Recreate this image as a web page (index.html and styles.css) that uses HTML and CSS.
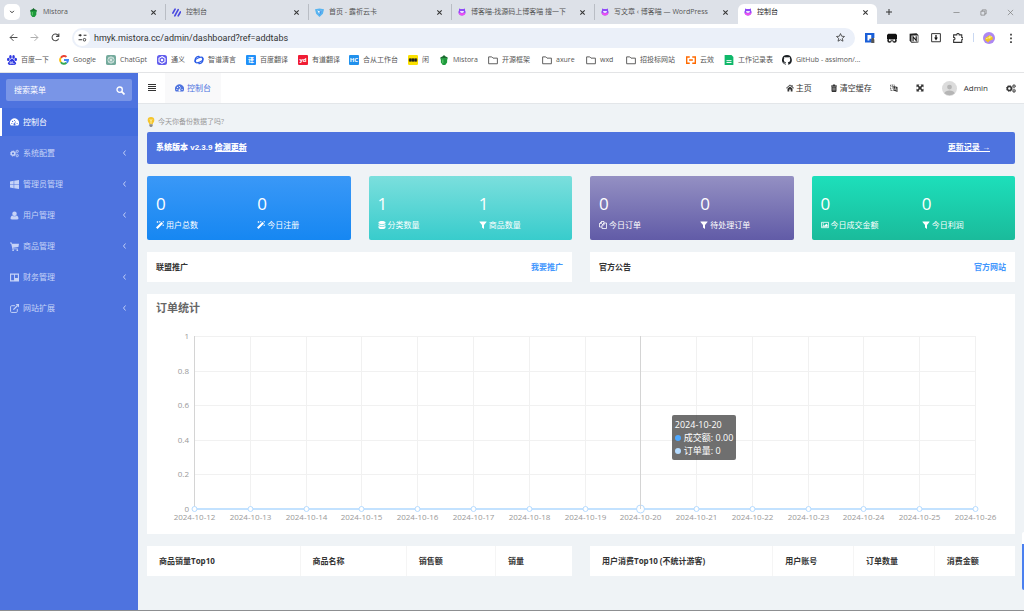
FILE: index.html
```html
<!DOCTYPE html>
<html lang="zh-CN">
<head>
<meta charset="utf-8">
<title>控制台</title>
<link rel="stylesheet" href="styles.css">
</head>
<body>
<svg class="sprite" aria-hidden="true">
  <symbol id="i-close" viewBox="0 0 16 16"><path d="M3 3l10 10M13 3L3 13" fill="none" stroke="currentColor" stroke-width="2.4"/></symbol>
  <symbol id="i-pot" viewBox="0 0 16 16"><path d="M2 4l4-2 2-2 2 2 4 2-1 2H3z" fill="#176b2c"/><path d="M2 5h12l-1 3v4l-3 4H6l-3-4V8z" fill="#1e9a3c"/><path d="M5 7h2v6H5z" fill="#5cc46c"/></symbol>
  <symbol id="i-slashes" viewBox="0 0 16 16"><path d="M1.500 9l4-7M5 14l6-11M11 14l4-7" stroke="#4a4ae0" stroke-width="3" stroke-linecap="round"/></symbol>
  <symbol id="i-shield" viewBox="0 0 16 16"><path d="M0 2l8-1 8 1-2 8-6 6-6-6z" fill="#58b4f0"/><path d="M4 4l4 7 4-7-4 2z" fill="#fff"/><path d="M8 7l4-3-4 9z" fill="#2a7be0"/></symbol>
  <symbol id="i-cat" viewBox="0 0 16 16"><path d="M2 1l3 1h6l3-1v4c3 4 0 10-6 10S-1 9 2 5z" fill="#8f4cf8"/><path d="M1 9c3 2 11 2 14 0-1 4-3 6-7 6s-6-2-7-6z" fill="#f04df0"/><path d="M4 6h8q0 4-4 4T4 6z" fill="#f4e6ff"/></symbol>
  <symbol id="i-home" viewBox="0 0 16 16"><path d="M0 8l8-7 3 3V2h2v3l3 3-1 1-7-6-7 6zM3 9l5-4 5 4v6H9.500v-4h-3v4H3z" fill="currentColor"/></symbol>
  <symbol id="i-trash" viewBox="0 0 16 16"><path d="M2 3h3l1-2h4l1 2h3v2H2z" fill="currentColor"/><path d="M3 5h10v9l-1 2H4l-1-2z" fill="currentColor"/><path d="M6 7v6M8 7v6M10 7v6" stroke="#fff" stroke-width=".8"/></symbol>
  <symbol id="i-lang" viewBox="0 0 16 16"><path d="M1 2h8v11H1zM3 5h4M5 3v2M3 10c3-1 3-3 3-5" fill="none" stroke="currentColor" stroke-width="1.300" stroke-dasharray="2 1"/><path d="M7 4l8 2v10l-8-3z" fill="currentColor"/><path d="M9 12l2-5 2 6M10 10.500h2.500" fill="none" stroke="#fff"/></symbol>
  <symbol id="i-expand" viewBox="0 0 16 16"><path d="M1 1h6L5.200 2.800 8 5.600l2.800-2.800L9 1h6v6l-1.800-1.800L10.400 8l2.800 2.800L15 9v6H9l1.800-1.800L8 10.400l-2.800 2.800L7 15H1V9l1.800 1.800L5.600 8 2.800 5.200 1 7z" fill="currentColor"/></symbol>
  <symbol id="i-cogs" viewBox="0 0 18 16"><circle cx="6" cy="8" r="3.600" fill="none" stroke="currentColor" stroke-width="2.800"/><circle cx="6" cy="8" r="5.300" fill="none" stroke="currentColor" stroke-width="1.600" stroke-dasharray="2.100 2.060"/><circle cx="14.500" cy="3.800" r="2" fill="none" stroke="currentColor" stroke-width="1.600"/><circle cx="14.500" cy="3.800" r="3" fill="none" stroke="currentColor" stroke-dasharray="1.300 1.060"/><circle cx="14.500" cy="12.200" r="2" fill="none" stroke="currentColor" stroke-width="1.600"/><circle cx="14.500" cy="12.200" r="3" fill="none" stroke="currentColor" stroke-dasharray="1.300 1.060"/></symbol>
  <symbol id="i-dash" viewBox="0 0 18 16"><path fill-rule="evenodd" d="M1.600 14A9 9 0 1 1 16.400 14zM2.500 10a1.200 1.200 0 1 0 2.400 0 1.200 1.200 0 1 0-2.400 0M4 5.800a1.200 1.200 0 1 0 2.400 0 1.200 1.200 0 1 0-2.400 0M7.800 4a1.200 1.200 0 1 0 2.400 0 1.200 1.200 0 1 0-2.400 0M13 10a1.200 1.200 0 1 0 2.400 0 1.200 1.200 0 1 0-2.400 0M10.600 5.500L8.800 9.400a2 2 0 1 0 1.300.400l1.600-4z" fill="currentColor"/></symbol>
  <symbol id="i-win" viewBox="0 0 16 16"><path d="M0 2.500l6.500-1v6H0zM7.500 1.300L16 0v7.500H7.500zM0 8.500h6.500v6L0 13.500zM7.500 8.500H16V16l-8.500-1.300z" fill="currentColor"/></symbol>
  <symbol id="i-user" viewBox="0 0 16 16"><circle cx="8" cy="5" r="4" fill="currentColor"/><path d="M4 8c2 2 6 2 8 0 2 1 3 3 3 5s-1 2-2 2H3c-1 0-2 0-2-2s1-4 3-5z" fill="currentColor"/></symbol>
  <symbol id="i-cart" viewBox="0 0 16 16"><path d="M0 1h3l.500 2H16l-1 6-9.500 1 .300 1.500H14V13H4.500L2 2.500H0z" fill="currentColor"/><circle cx="5.500" cy="14.500" r="1.500" fill="currentColor"/><circle cx="13" cy="14.500" r="1.500" fill="currentColor"/></symbol>
  <symbol id="i-trello" viewBox="0 0 16 16"><path fill-rule="evenodd" d="M0 1h16v14H0zM2 3v10h5.200V3zM8.800 3v6H14V3z" fill="currentColor"/></symbol>
  <symbol id="i-ext" viewBox="0 0 16 16"><path d="M9 3H3Q1 3 1 5v8q0 2 2 2h8q2 0 2-2V9" fill="none" stroke="currentColor" stroke-width="1.700"/><path d="M6 10l7-7" stroke="currentColor" stroke-width="2.200"/><path d="M10 0h6v6z" fill="currentColor"/></symbol>
  <symbol id="i-left" viewBox="0 0 8 16"><path d="M6 3L2 8l4 5" fill="none" stroke="currentColor" stroke-width="1.900"/></symbol>
  <symbol id="i-search" viewBox="0 0 16 16"><circle cx="6.500" cy="6.500" r="4.700" fill="none" stroke="currentColor" stroke-width="2.400"/><path d="M10 10l5 5" stroke="currentColor" stroke-width="3"/></symbol>
  <symbol id="i-magic" viewBox="0 0 16 16"><path d="M0 13L11 2l3 3L3 16z" fill="currentColor"/><path d="M3 0v4M1 2h4M7.500 0v3M6 1.500h3M14.500 0v3M13 1.500h3M14.500 7v3M13 8.500h3" stroke="currentColor" stroke-width="1.200"/></symbol>
  <symbol id="i-db" viewBox="0 0 16 16"><path d="M1 3c0-4 14-4 14 0v1c0 3-14 3-14 0zM1 6c3 2 11 2 14 0v2c0 3-14 3-14 0zM1 10c3 2 11 2 14 0v3c0 4-14 4-14 0z" fill="currentColor"/></symbol>
  <symbol id="i-filter" viewBox="0 0 16 16"><path d="M1 1h14v1l-5 6v8l-4-3V8L1 2z" fill="currentColor"/></symbol>
  <symbol id="i-copy" viewBox="0 0 16 16"><path d="M5 1h5v3M5 1L1 5v7h5M5 1v4H1M10 4h5v11H6V8zM10 4v4H6" fill="none" stroke="currentColor" stroke-width="1.600"/></symbol>
  <symbol id="i-image" viewBox="0 0 18 16"><path d="M1 2h16v12H1z" fill="none" stroke="currentColor" stroke-width="1.800"/><circle cx="5" cy="5.500" r="1.500" fill="currentColor"/><path d="M3 12v-2l3-2 1.500 1.500L12 5l3 3v4z" fill="currentColor"/></symbol>
  <symbol id="i-folder" viewBox="0 0 16 16"><path d="M1 3h5l2 2h7v9H1z" fill="none" stroke="currentColor" stroke-width="1.500" stroke-linejoin="round"/></symbol>
  <symbol id="i-bars" viewBox="0 0 8 8"><path d="M0 .5h8M0 2.500h8M0 4.500h8M0 6.500h8" stroke="currentColor"/></symbol>
</svg>

<header class="browser">
  <nav class="tabs">
    <button class="tab-list" aria-label="搜索标签页"><svg viewBox="0 0 16 16"><path d="M3 5l5 5 5-5" fill="none" stroke="#222" stroke-width="2.400"/></svg></button>
    <div class="tab"><svg class="fav"><use href="#i-pot"/></svg><span class="latin">Mistora</span><button aria-label="关闭"><svg><use href="#i-close"/></svg></button></div>
    <div class="tab"><svg class="fav"><use href="#i-slashes"/></svg><span>控制台</span><button aria-label="关闭"><svg><use href="#i-close"/></svg></button></div>
    <div class="tab"><svg class="fav"><use href="#i-shield"/></svg><span>首页 - 露祈云卡</span><button aria-label="关闭"><svg><use href="#i-close"/></svg></button></div>
    <div class="tab"><svg class="fav small"><use href="#i-cat"/></svg><span>博客喵-找源码上博客喵 搜一下</span><button aria-label="关闭"><svg><use href="#i-close"/></svg></button></div>
    <div class="tab last"><svg class="fav small"><use href="#i-cat"/></svg><span>写文章 ‹ 博客喵 — WordPress</span><button aria-label="关闭"><svg><use href="#i-close"/></svg></button></div>
    <div class="tab active"><svg class="fav small"><use href="#i-cat"/></svg><span>控制台</span><button aria-label="关闭"><svg><use href="#i-close"/></svg></button></div>
    <button class="new-tab" aria-label="新标签页"><svg viewBox="0 0 16 16"><path d="M8 2v12M2 8h12" stroke="#333" stroke-width="2"/></svg></button>
    <div class="window-buttons">
      <button aria-label="最小化"><svg viewBox="0 0 16 16"><path d="M1 8h14" stroke="#777" stroke-width="1.500"/></svg></button>
      <button aria-label="还原"><svg viewBox="0 0 16 16"><path d="M2 5h9v9H2zM5 5V2h9v9h-3" fill="none" stroke="#777" stroke-width="1.500"/></svg></button>
      <button aria-label="关闭窗口"><svg viewBox="0 0 16 16"><path d="M2 2l12 12M14 2L2 14" stroke="#777" stroke-width="1.500"/></svg></button>
    </div>
  </nav>
  <div class="toolbar">
    <button aria-label="后退"><svg viewBox="0 0 16 16"><path d="M15 8H2M8 2L2 8l6 6" fill="none" stroke="#444" stroke-width="1.700"/></svg></button>
    <button aria-label="前进"><svg viewBox="0 0 16 16"><path d="M1 8h13M8 2l6 6-6 6" fill="none" stroke="#aaa" stroke-width="1.700"/></svg></button>
    <button aria-label="刷新"><svg viewBox="0 0 16 16"><path d="M13.500 10A6 6 0 1 1 12 3.500l2 2M14 1v5H9" fill="none" stroke="#444" stroke-width="1.800"/></svg></button>
    <div class="omnibox">
      <span class="site"><svg viewBox="0 0 16 16"><path d="M1 4h5M10 4h5M1 12h6" stroke="#333" stroke-width="1.800"/><circle cx="4" cy="4" r="2" fill="#333"/><circle cx="11.500" cy="12" r="2.300" fill="none" stroke="#333" stroke-width="1.600"/></svg></span>
      <input aria-label="地址" value="hmyk.mistora.cc/admin/dashboard?ref=addtabs">
      <button aria-label="收藏"><svg viewBox="0 0 16 16"><path d="M8 1l2.100 4.700 5 .500-3.800 3.400 1.100 5L8 12l-4.400 2.600 1.100-5L.900 6.200l5-.500z" fill="none" stroke="#333" stroke-width="1.400"/></svg></button>
    </div>
    <div class="extensions">
      <button aria-label="翻译"><svg viewBox="0 0 16 16"><path d="M0 0h15v8h-4v7H0z" fill="#1a5fd8"/><path d="M4 3h6v6H7v3H4z" fill="#fff"/><path d="M10 11l1-3h3l1 3v5h-5z" fill="#555"/></svg></button>
      <button aria-label="脚本"><svg viewBox="0 0 16 16"><path d="M2 1h12l2 2v7H0V3z" fill="#111"/><circle cx="4" cy="12" r="3.500" fill="#111"/><circle cx="12" cy="12" r="3.500" fill="#111"/><path d="M3 10h3v3H3zM10 10h3v3h-3z" fill="#fff"/></svg></button>
      <button aria-label="笔记"><svg viewBox="0 0 16 16"><path d="M1 1l11-.5 3 2.500v12l-11 .500-3-3z" fill="#222"/><path d="M4 4h10v10H4z" fill="#fff"/><path d="M6.500 13V6l5 6V5" fill="none" stroke="#111" stroke-width="1.800"/></svg></button>
      <button aria-label="下载"><svg viewBox="0 0 16 16"><path d="M1 1h14v13H1z" fill="none" stroke="#333" stroke-width="1.600"/><path d="M7 3h2v4h2l-3 5-3-5h2z" fill="#111"/></svg></button>
      <button aria-label="扩展程序"><svg viewBox="0 0 16 16"><path d="M1 3h5c0-3 4-3 4 0h4v4c3 0 3 4 0 4v4H1v-4c3 0 3-4 0-4z" fill="none" stroke="#333" stroke-width="1.700"/></svg></button>
      <i class="divider"></i>
      <button class="profile" aria-label="个人资料"><svg viewBox="0 0 16 16"><circle cx="8" cy="8" r="8" fill="#ad87f2"/><path d="M3 8l6-4 4 3v3l-5 2-1 2-4-3z" fill="#f2c51e"/><path d="M4 9l8-3M9 5v4" stroke="#fff3a0"/></svg></button>
      <button aria-label="菜单"><svg viewBox="0 0 16 16"><path d="M8 1v3M8 7v3M8 13v3" stroke="#333" stroke-width="2.600"/></svg></button>
    </div>
  </div>
  <nav class="bookmarks">
    <a href="#"><svg viewBox="0 0 16 16"><g fill="#2b35e0"><ellipse cx="2" cy="7" rx="2" ry="2.500"/><ellipse cx="5.500" cy="3" rx="2" ry="3"/><ellipse cx="10.500" cy="3" rx="2" ry="3"/><ellipse cx="14" cy="7" rx="2" ry="2.500"/><path d="M8 6c3 0 4 4 6 6s-1 4-3 4H5c-2 0-5-2-3-4s3-6 6-6z"/></g><path d="M5 11h2v3H5zM9 10v4h3" fill="none" stroke="#fff"/></svg><span>百度一下</span></a>
    <a href="#"><svg viewBox="0 0 16 16" fill="none" stroke-width="3"><path d="M3 4.500A6 6 0 0 1 12 3" stroke="#ea4335"/><path d="M3 11.500A6 6 0 0 1 3 4.500" stroke="#fbbc05"/><path d="M12 12.500a6 6 0 0 1-9-1" stroke="#34a853"/><path d="M8 8h6.500c0 2-1 3.500-2.500 4.500" stroke="#4285f4"/></svg><span>Google</span></a>
    <a href="#"><svg viewBox="0 0 16 16"><rect width="16" height="16" rx="3" fill="#74aa9c"/><circle cx="8" cy="8" r="5" fill="none" stroke="#fff"/><path d="M8 3v5l4 3M4 5l4 3-4 3M12 5L8 8v5" stroke="#fff" fill="none"/></svg><span>ChatGpt</span></a>
    <a href="#"><svg viewBox="0 0 16 16"><rect width="16" height="16" rx="4" fill="#615ced"/><path d="M8 2.500l4.800 2.700v5.600L8 13.500l-4.800-2.700V5.200z" fill="none" stroke="#fff" stroke-width="1.700"/><circle cx="8" cy="8" r="2" fill="#fff"/></svg><span>通义</span></a>
    <a href="#"><svg viewBox="0 0 16 16" fill="none" stroke="#2b5ce6" stroke-width="2"><ellipse cx="8" cy="8" rx="7" ry="3.600" transform="rotate(-25 8 8)"/><path d="M3 11A5.500 5.500 0 0 1 9 2.500M13 5A5.500 5.500 0 0 1 7 13.500"/></svg><span>智谱清言</span></a>
    <a href="#"><i class="badge blue">译</i><span>百度翻译</span></a>
    <a href="#"><i class="badge red">yd</i><span>有道翻译</span></a>
    <a href="#"><i class="badge sky">HC</i><span>合从工作台</span></a>
    <a href="#"><svg viewBox="0 0 16 16"><rect width="16" height="16" rx="2" fill="#fbe000"/><path d="M2 6h3v4H2zM6 6h4v4H6zM11 6h3v4h-3z" fill="#222" stroke="#222"/></svg><span>闲</span></a>
    <a href="#"><svg><use href="#i-pot"/></svg><span>Mistora</span></a>
    <a href="#"><svg><use href="#i-folder"/></svg><span>开源框架</span></a>
    <a href="#"><svg><use href="#i-folder"/></svg><span>axure</span></a>
    <a href="#"><svg><use href="#i-folder"/></svg><span>wxd</span></a>
    <a href="#"><svg><use href="#i-folder"/></svg><span>招投标网站</span></a>
    <a href="#"><svg viewBox="0 0 16 16"><path d="M6 3H1v10h5M10 3h5v10h-5M5 8h6" fill="none" stroke="#ff6a00" stroke-width="2.400"/></svg><span>云效</span></a>
    <a href="#"><svg viewBox="0 0 16 16"><path d="M1 0h11l3 3v13H1z" fill="#10b86a"/><path d="M4 9h8M4 12h8" stroke="#fff" stroke-width="1.500"/></svg><span>工作记录表</span></a>
    <a href="#"><svg viewBox="0 0 16 16"><path fill="#1b1f23" d="M8 0a8 8 0 0 0-2.500 15.600c.400 0 .500-.2.500-.4v-1.500c-2.200.500-2.700-1-2.700-1-.4-.9-.9-1.200-.9-1.200-.7-.5.100-.5.100-.5.800.1 1.200.8 1.200.8.700 1.300 1.900.9 2.300.7.100-.5.300-.9.500-1.100-1.800-.2-3.600-.9-3.600-4 0-.9.300-1.600.8-2.100-.1-.2-.4-1 .1-2.100 0 0 .7-.2 2.200.8a7.600 7.600 0 0 1 4 0c1.500-1 2.200-.8 2.200-.8.400 1.100.2 1.900.1 2.100.5.600.8 1.300.8 2.100 0 3.100-1.900 3.800-3.700 4 .3.300.6.800.6 1.500v2.200c0 .2.100.5.500.4A8 8 0 0 0 8 0z"/></svg><span>GitHub - assimon/...</span></a>
  </nav>
</header>

<div class="app">
  <aside class="sidebar">
    <form class="search"><input aria-label="搜索菜单" placeholder="搜索菜单"><button type="button" aria-label="搜索"><svg><use href="#i-search"/></svg></button></form>
    <nav class="menu">
      <a href="#" class="current"><svg><use href="#i-dash"/></svg>控制台</a>
      <a href="#"><svg><use href="#i-cogs"/></svg>系统配置<svg class="arrow"><use href="#i-left"/></svg></a>
      <a href="#"><svg><use href="#i-win"/></svg>管理员管理<svg class="arrow"><use href="#i-left"/></svg></a>
      <a href="#"><svg><use href="#i-user"/></svg>用户管理<svg class="arrow"><use href="#i-left"/></svg></a>
      <a href="#"><svg><use href="#i-cart"/></svg>商品管理<svg class="arrow"><use href="#i-left"/></svg></a>
      <a href="#"><svg><use href="#i-trello"/></svg>财务管理<svg class="arrow"><use href="#i-left"/></svg></a>
      <a href="#"><svg><use href="#i-ext"/></svg>网站扩展<svg class="arrow"><use href="#i-left"/></svg></a>
    </nav>
  </aside>

  <div class="page">
    <header class="topbar">
      <button class="toggle" aria-label="折叠菜单"><svg><use href="#i-bars"/></svg></button>
      <a href="#" class="page-tab"><svg><use href="#i-dash"/></svg>控制台</a>
      <nav class="tools">
        <a href="#"><svg><use href="#i-home"/></svg>主页</a>
        <a href="#"><svg><use href="#i-trash"/></svg>清空缓存</a>
        <a href="#" aria-label="语言"><svg><use href="#i-lang"/></svg></a>
        <a href="#" aria-label="全屏"><svg><use href="#i-expand"/></svg></a>
        <a href="#" class="account"><svg viewBox="0 0 16 16"><circle cx="8" cy="8" r="8" fill="#dcdcdc"/><circle cx="8" cy="6.500" r="2.600" fill="#b5b5b5"/><path d="M2.500 13c1-4 10-4 11 0a8 8 0 0 1-11 0z" fill="#b5b5b5"/></svg>Admin</a>
        <a href="#" class="settings" aria-label="设置"><svg><use href="#i-cogs"/></svg></a>
      </nav>
    </header>

    <main class="content">
      <p class="hint"><svg viewBox="0 0 14 18"><path d="M7 0a6 6 0 0 1 6 6c0 3-2 4-3 7H4C3 10 1 9 1 6a6 6 0 0 1 6-6z" fill="#f5c52d"/><path d="M5 4l2 3 2-3M7 7v5" stroke="#fff5b0" stroke-width="1.500" fill="none"/><path d="M4 13h6v3l-2 2H6l-2-2z" fill="#8a8a8a"/></svg>今天你备份数据了吗?</p>
      <section class="banner"><strong>系统版本 v2.3.9 <a href="#">检测更新</a></strong><a href="#">更新记录 →</a></section>

      <section class="stats">
        <div class="card c-blue">
          <div><b>0</b><span><svg><use href="#i-magic"/></svg>用户总数</span></div>
          <div><b>0</b><span><svg><use href="#i-magic"/></svg>今日注册</span></div>
        </div>
        <div class="card c-teal">
          <div><b>1</b><span><svg><use href="#i-db"/></svg>分类数量</span></div>
          <div><b>1</b><span><svg><use href="#i-filter"/></svg>商品数量</span></div>
        </div>
        <div class="card c-purple">
          <div><b>0</b><span><svg><use href="#i-copy"/></svg>今日订单</span></div>
          <div><b>0</b><span><svg><use href="#i-filter"/></svg>待处理订单</span></div>
        </div>
        <div class="card c-green">
          <div><b>0</b><span><svg><use href="#i-image"/></svg>今日成交金额</span></div>
          <div><b>0</b><span><svg><use href="#i-filter"/></svg>今日利润</span></div>
        </div>
      </section>

      <section class="pair">
        <div class="notice"><h2>联盟推广</h2><a href="#">我要推广</a></div>
        <div class="notice"><h2>官方公告</h2><a href="#">官方网站</a></div>
      </section>

      <section class="chart-panel">
        <h2>订单统计</h2>
        <div class="chart">
          <svg id="chart" viewBox="0 0 868 212" role="img" aria-label="订单统计"></svg>
          <div class="tooltip">
            <div>2024-10-20</div>
            <div><i class="dot amount"></i>成交额: 0.00</div>
            <div><i class="dot orders"></i>订单量: 0</div>
          </div>
        </div>
      </section>

      <section class="pair">
        <table><colgroup><col class="w36"><col class="w25"><col class="w21"><col></colgroup>
          <thead><tr><th>商品销量Top10</th><th>商品名称</th><th>销售额</th><th>销量</th></tr></thead></table>
        <table><colgroup><col class="w43"><col class="w19"><col class="w19"><col></colgroup>
          <thead><tr><th>用户消费Top10 (不统计游客)</th><th>用户账号</th><th>订单数量</th><th>消费金额</th></tr></thead></table>
      </section>
    </main>
    <span class="side-handle"></span>
  </div>
</div>
<script src="chart.js"></script>
</body>
</html>
```
FILE: styles.css
```css
* { box-sizing: border-box; }
body {
  margin: 0;
  min-height: 100vh;
  display: flex;
  flex-direction: column;
  font: 8px/12px "Open Sans", "Noto Sans CJK SC", sans-serif;
  color: #444;
  background: #eff3f6;
  border-bottom: 1px solid #8d8f91;
}
a { color: inherit; text-decoration: none; }
button { border: 0; padding: 0; background: none; color: inherit; display: grid; place-items: center; }
input { border: 0; padding: 0; background: none; font: inherit; color: inherit; width: 100%; min-width: 0; outline: 0; }
svg { width: 9px; height: 9px; flex: none; display: block; }
h2, p { margin: 0; }
.sprite { position: absolute; width: 0; height: 0; }

/* browser frame */
.browser { background: #fff; border-bottom: 1px solid #e3e4e6; color: #555; }
.tabs { display: flex; height: 24px; padding: 4px 0 0 4px; background: #dde1e8; }
.tab-list { width: 16px; height: 16px; border-radius: 5px; background: #fff; margin-right: 3px; }
.tab-list svg { width: 6px; height: 6px; }
.tab {
  flex: 0 1 143px;
  min-width: 0;
  display: flex;
  align-items: center;
  gap: 5px;
  height: 16px;
  padding: 0 8px 0 6px;
  border-right: 1px solid #b9bdc4;
  font-size: 7px;
}
.tab span { flex: 1; overflow: hidden; white-space: nowrap; }
.tab .latin { font-size: 7px; }
.tab.last { border-right-color: transparent; }
.tab.active {
  flex-basis: 139px;
  height: 20px;
  padding-bottom: 4px;
  border: 0;
  border-radius: 6px 6px 0 0;
  background: #fff;
  color: #222;
}
.fav.small { width: 8px; height: 8px; }
.tab button svg { width: 7px; height: 7px; color: #333; }
.new-tab { width: 24px; height: 16px; }
.new-tab svg { width: 8px; height: 8px; }
.window-buttons { margin-left: auto; display: flex; height: 16px; }
.window-buttons button { width: 27px; }
.window-buttons svg { width: 7px; height: 7px; }
.toolbar { display: flex; align-items: center; height: 27px; padding: 0 2px 0 3px; }
.toolbar > button { width: 21px; }
.omnibox {
  flex: 1;
  display: flex;
  align-items: center;
  gap: 4px;
  height: 20px;
  margin-left: 6px;
  padding: 0 10px 0 2px;
  border-radius: 10px;
  background: #ebf0f9;
}
.omnibox input { flex: 1; font: 9px/14px Roboto, sans-serif; color: #333; }
.site { width: 16px; height: 16px; border-radius: 8px; background: #fff; display: grid; place-items: center; flex: none; }
.extensions { display: flex; align-items: center; margin-left: 4px; }
.extensions button { width: 22px; }
.extensions svg { width: 10px; height: 10px; }
.extensions .profile svg { width: 12px; height: 12px; }
.divider { width: 1px; height: 9px; margin: 0 4px; background: #c9d8f2; }
.bookmarks {
  display: grid;
  grid-template-columns: 52px 47px 51px 37px 52px 52px 51px 59px 31px 49px 54px 44px 40px 60px 38px 58px auto;
  align-items: center;
  height: 21px;
  padding: 0 0 3px 7px;
  font-size: 7px;
}
.bookmarks a { display: flex; align-items: center; gap: 4px; white-space: nowrap; }
.bookmarks svg { width: 10px; height: 10px; }
.badge { width: 10px; height: 10px; border-radius: 1px; color: #fff; font: bold 6px/10px "Open Sans", "Noto Sans CJK SC", sans-serif; text-align: center; }
.blue { background: #2090f8; }
.red { background: #f01c34; }
.sky { background: #2090ec; }

/* application */
.app { flex: 1; display: flex; position: relative; }
.sidebar { flex: 0 0 138px; min-width: 0; background: #4e73df; color: #c6d3f7; }
.search { display: flex; align-items: center; height: 22px; margin: 6px 6px 7px; padding: 0 7px 0 8px; border-radius: 2px; background: #7995e7; color: #fff; }
.search input { flex: 1; font-size: 8px; }
.search input::placeholder { color: #fff; opacity: 1; }
.menu { display: flex; flex-direction: column; gap: 3px; }
.menu a { display: flex; align-items: center; gap: 4px; height: 28px; padding: 0 10px; }
.menu .current { padding-left: 8px; border-left: 2px solid #fff; background: #446ddd; color: #fff; }
.menu .arrow { width: 7px; height: 8px; margin-left: auto; }
.page { flex: 1; min-width: 0; }
.topbar { display: flex; height: 31px; background: #fff; border-bottom: 1px solid #e3e6e9; color: #333; }
.toggle { width: 27px; }
.toggle svg { width: 8px; height: 8px; }
.page-tab { display: flex; align-items: center; gap: 3px; padding: 0 10px; background: #f9f9fa; color: #4e73df; }
.tools { display: flex; align-items: center; gap: 18px; margin-left: auto; padding-right: 8px; }
.tools a { display: flex; align-items: center; gap: 2px; }
.tools svg { width: 8px; height: 8px; }
.tools .account { gap: 7px; }
.tools .account svg { width: 15px; height: 15px; }
.tools .settings svg { width: 10px; height: 9px; }

.content { display: grid; gap: 12px; padding: 12px 9px 34px; }
.hint { display: flex; align-items: center; gap: 3px; margin-bottom: -12px; padding-bottom: 4px; font-size: 7px; color: #999; }
.hint svg { width: 8px; height: 10px; }
.banner {
  display: flex;
  align-items: center;
  justify-content: space-between;
  height: 32px;
  padding: 0 25px 0 9px;
  border-radius: 2px;
  background: #4e73df;
  color: #fff;
  font: bold 8px/12px "Liberation Sans", "Noto Sans CJK SC", sans-serif;
}
.banner a { text-decoration: underline; }
.stats { display: grid; grid-template-columns: repeat(4, 1fr); gap: 18px; }
.card { display: grid; grid-template-columns: 1fr 1fr; height: 64px; padding: 18px 0 0 9px; border-radius: 2px; color: #fff; }
.card div + div { padding-left: 4px; }
.card b { display: block; font: 17px/20px "Open Sans", sans-serif; }
.card span { display: flex; align-items: center; gap: 2px; height: 22px; }
.card span svg { width: 8px; height: 8px; }
.c-blue { background: linear-gradient(#3a98f7, #1687f2); }
.c-teal { background: linear-gradient(#7bdfdd, #38cccc); }
.c-purple { background: linear-gradient(#9490c3, #615ba7); }
.c-green { background: linear-gradient(#1ddfbb, #1abb9b); }
.pair { display: grid; grid-template-columns: 1fr 1fr; gap: 18px; }
.notice { display: flex; align-items: center; justify-content: space-between; height: 30px; padding: 0 9px; background: #fff; font-weight: bold; }
.notice h2 { font-size: 8px; color: #333; }
.notice a { color: #4397fd; }
.chart-panel { background: #fff; }
.chart-panel h2 { padding: 6px 9px; font-size: 11px; line-height: 16px; color: #666; }
.chart { position: relative; }
.chart > svg { width: 100%; height: auto; }
.grid-line { stroke: #f1f1f1; }
.axis { stroke: #d4d4d4; }
.series { stroke: #c3e2ff; stroke-width: 2; }
.point { fill: #fff; stroke: #b5dbff; }
.label { fill: #999; font-size: 8px; text-anchor: middle; }
.label.value { text-anchor: end; }
.tooltip {
  position: absolute;
  left: 60%;
  top: 44%;
  margin-left: 4px;
  padding: 3px;
  border-radius: 2px;
  background: rgba(50, 50, 50, .7);
  color: #fff;
  font-size: 9px;
  line-height: 13px;
  white-space: nowrap;
}
.dot { display: inline-block; width: 6px; height: 6px; margin-right: 3px; border-radius: 3px; }
.amount { background: #4ea8ff; }
.orders { background: #b5dbff; }
table { width: 100%; table-layout: fixed; border-collapse: collapse; background: #fff; }
th { height: 30px; padding: 0 0 0 12px; text-align: left; color: #333; font-size: 8px; white-space: nowrap; }
th + th { border-left: 1px solid #f5f5f5; }
.w36 { width: 36%; }
.w25 { width: 25%; }
.w21 { width: 21%; }
.w43 { width: 43%; }
.w19 { width: 19%; }
.side-handle { position: absolute; right: 0; bottom: 20px; width: 2px; height: 58px; border-radius: 2px 0 0 2px; background: linear-gradient(#fff 12px, #4a80f0 12px); }
```
FILE: chart.js
```js
const svg = document.getElementById('chart');
const NS = 'http://www.w3.org/2000/svg';
const left = 47, right = 828, top_ = 14, bottom = 187;
const days = 15, active = 8;

function add(tag, attrs, text) {
  const el = document.createElementNS(NS, tag);
  for (const key in attrs) el.setAttribute(key, attrs[key]);
  if (text !== undefined) el.textContent = text;
  svg.appendChild(el);
}
function line(x1, y1, x2, y2, cls) {
  add('line', { x1, y1, x2, y2, class: cls });
}
const dayX = i => Math.round(left + (right - left) * i / (days - 1)) + 0.5;

['0', '0.2', '0.4', '0.6', '0.8', '1'].forEach((value, i) => {
  const y = Math.round(bottom - (bottom - top_) * i / 5) + 0.5;
  line(left, y, right, y, 'grid-line');
  add('text', { x: left - 5, y: y + 2, class: 'label value' }, value);
});
for (let i = 0; i < days; i++) {
  if (i !== active) line(dayX(i), top_, dayX(i), bottom, i === 0 ? 'axis' : 'grid-line');
  add('text', { x: dayX(i), y: bottom + 11, class: 'label' }, '2024-10-' + (12 + i));
}
line(left, bottom, right, bottom, 'series');
for (let i = 0; i < days; i++) {
  add('circle', { cx: dayX(i), cy: bottom, r: i === active ? 4 : 2.5, class: 'point' });
}
line(dayX(active), top_, dayX(active), bottom, 'axis');
```
